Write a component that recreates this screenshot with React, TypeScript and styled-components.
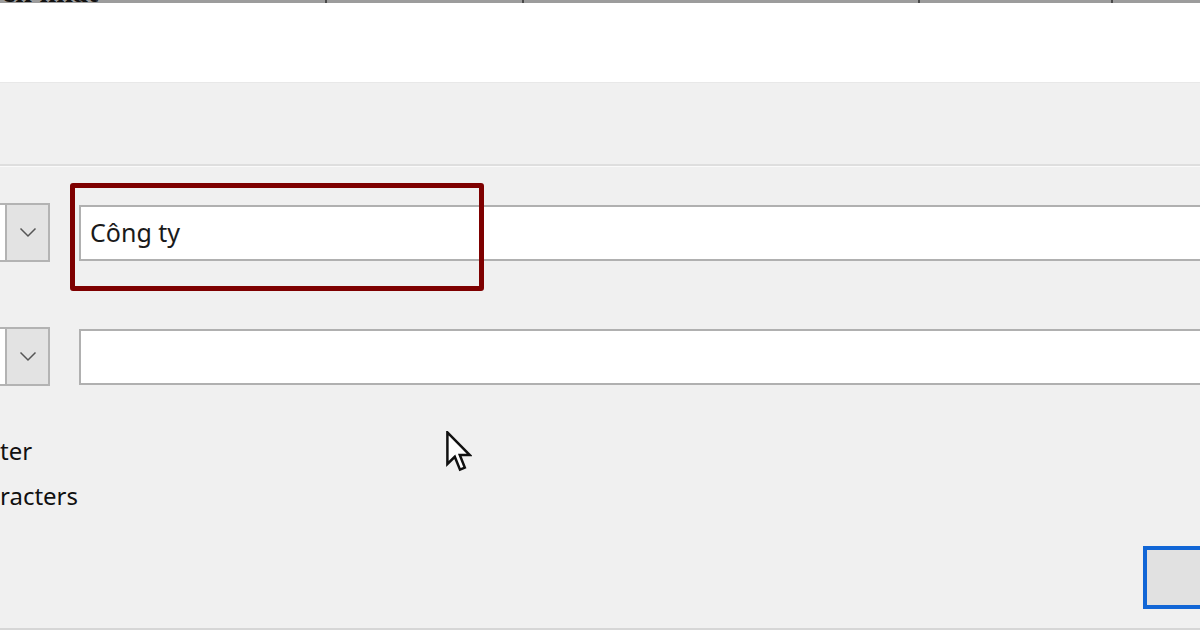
import styled, { createGlobalStyle } from "styled-components";

const GlobalStyle = createGlobalStyle`
  html, body {
    margin: 0;
    padding: 0;
    background: #f0f0f0;
  }
  body {
    font-family: "Noto Sans", "Open Sans", sans-serif;
    color: #111;
  }
`;

const Page = styled.div`
  position: relative;
  width: 1200px;
  height: 630px;
  display: flex;
  flex-direction: column;
  overflow: hidden;
`;

const SheetStrip = styled.div`
  height: 3px;
  display: flex;
  align-items: flex-end;
  overflow: hidden;
  background: #9c9c9c;
`;

const SheetCell = styled.div<{ $w: number }>`
  width: ${(p) => p.$w}px;
  flex: none;
  height: 3px;
  display: flex;
  align-items: flex-end;
  border-right: 2px solid #4a4a4a;
  box-sizing: border-box;
`;

const SheetText = styled.span`
  font-family: "Liberation Serif", serif;
  font-weight: bold;
  font-size: 30px;
  line-height: 0.72;
  color: #111;
  background: #9c9c9c;
  white-space: nowrap;
  margin-left: -18px;
`;

const WhiteBand = styled.div`
  height: 79px;
  background: #fff;
`;

const Dialog = styled.div`
  flex: 1;
  display: flex;
  flex-direction: column;
  background: #f0f0f0;
  border-top: 1px solid #e8e8e8;
  border-bottom: 2px solid #d6d6d6;
`;

const TopSpace = styled.div`
  height: 81px;
`;

const Divider = styled.div`
  height: 2px;
  background: #dedede;
  border-bottom: 1px solid #fafafa;
`;

const Row = styled.div<{ $top: number }>`
  position: relative;
  display: flex;
  align-items: center;
  margin-top: ${(p) => p.$top}px;
`;

const Combo = styled.div`
  display: flex;
  height: 59px;
  box-sizing: border-box;
  border: 2px solid #b3b3b3;
  border-left: none;
`;

const ComboField = styled.div`
  width: 5px;
  background: #fff;
  border-right: 2px solid #b3b3b3;
`;

const ComboButton = styled.div`
  width: 41px;
  display: flex;
  align-items: center;
  justify-content: center;
  background: #e3e3e3;
`;

const TextField = styled.div`
  flex: 1;
  margin-left: 29px;
  margin-right: -40px;
  height: 56px;
  box-sizing: border-box;
  border: 2px solid #b0b0b0;
  background: #fff;
  display: flex;
  align-items: center;
  padding-left: 9px;
  padding-bottom: 2px;
  font-size: 25px;
  color: #1a1a1a;
`;

const Highlight = styled.div`
  position: absolute;
  left: 70px;
  top: -20px;
  width: 414px;
  height: 108px;
  box-sizing: border-box;
  border: 5px solid #7e0000;
  border-radius: 3px;
  pointer-events: none;
`;

const Hints = styled.div`
  margin-top: 42px;
  display: flex;
  flex-direction: column;
`;

const HintLine = styled.div`
  font-size: 24px;
  line-height: 45px;
  color: #111;
  white-space: nowrap;
`;

const Footer = styled.div`
  flex: 1;
  display: flex;
  justify-content: flex-end;
  align-items: flex-start;
  padding-top: 28px;
`;

const OkButton = styled.button`
  width: 150px;
  height: 63px;
  margin-right: -93px;
  box-sizing: border-box;
  border: 4px solid #1166d6;
  background: #e1e1e1;
  font-family: inherit;
  font-size: 24px;
  color: #1a1a1a;
`;

const Cursor = styled.svg`
  position: absolute;
  left: 446px;
  top: 431px;
`;

const Chevron = () => (
  <svg width="18" height="11" viewBox="0 0 18 11">
    <path d="M1.5 1.5 L9 9 L16.5 1.5" fill="none" stroke="#555" strokeWidth="1.5" />
  </svg>
);

const cells = [327, 197, 396, 193, 120];

export default function App() {
  return (
    <>
      <GlobalStyle />
      <Page>
        <SheetStrip>
          {cells.map((w, i) => (
            <SheetCell key={i} $w={w}>
              {i === 0 && <SheetText>Tên nhất</SheetText>}
            </SheetCell>
          ))}
        </SheetStrip>
        <WhiteBand />
        <Dialog>
          <TopSpace />
          <Divider />
          <Row $top={36}>
            <Combo>
              <ComboField />
              <ComboButton>
                <Chevron />
              </ComboButton>
            </Combo>
            <TextField>Công ty</TextField>
            <Highlight />
          </Row>
          <Row $top={65}>
            <Combo>
              <ComboField />
              <ComboButton>
                <Chevron />
              </ComboButton>
            </Combo>
            <TextField />
          </Row>
          <Hints>
            <HintLine>ter</HintLine>
            <HintLine>racters</HintLine>
          </Hints>
          <Footer>
            <OkButton>OK</OkButton>
          </Footer>
        </Dialog>
        <Cursor width="26" height="42" viewBox="0 0 13 21">
          <path
            d="M0.7 0.7 L0.7 16.5 L4.4 12.9 L7 19.3 L9.4 18.3 L6.9 12 L11.9 12 Z"
            fill="#fff"
            stroke="#111"
            strokeWidth="1.25"
            strokeLinejoin="miter"
          />
        </Cursor>
      </Page>
    </>
  );
}
